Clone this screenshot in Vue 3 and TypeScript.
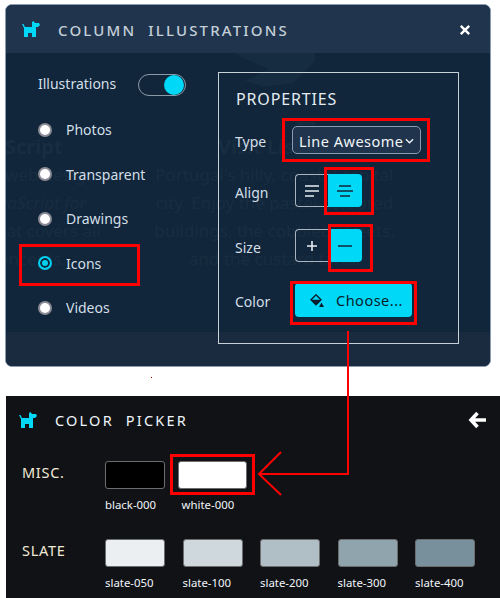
<script setup lang="ts">
const radios = [
  { name: 'Photos', on: false },
  { name: 'Transparent', on: false },
  { name: 'Drawings', on: false },
  { name: 'Icons', on: true },
  { name: 'Videos', on: false },
]

const slates = [
  { name: 'slate-050', color: '#eceff1' },
  { name: 'slate-100', color: '#cfd8dc' },
  { name: 'slate-200', color: '#b0bec5' },
  { name: 'slate-300', color: '#90a4ae' },
  { name: 'slate-400', color: '#78909c' },
]

const dogPath = 'M2 7L0 3h1.5L3 6h7V1l1.5-1L13 2h4l1 2-2 2h-2v10h-4v-4H6v4H2z'
</script>

<template>
  <div class="page">
    <section class="modal">
      <header class="modal-head">
        <svg class="dog" viewBox="0 0 18 16"><path :d="dogPath" /></svg>
        <h1 class="modal-title">COLUMN&nbsp; ILLUSTRATIONS</h1>
        <svg class="close" viewBox="0 0 10 10"><path d="M1.5 1.5l7 7M8.5 1.5l-7 7" /></svg>
      </header>

      <div class="modal-body">
        <!-- page behind the dialog, shows through -->
        <div class="ghost">
          <svg class="ghost-shape" viewBox="0 0 80 34"><path d="M0 0H80V8L58 30L30 34L10 28L34 16L10 6z" /></svg>
          <span class="ghost-bar"></span>
          <div class="ghost-left">
            <b>Script</b>
            <span>web design</span>
            <i>JavaScript for</i>
            <span>that covers all</span>
            <span>concepts.</span>
          </div>
          <div class="ghost-right">
            <b>Visit Lisbon</b>
            <span>Portugal's hilly, coastal capital</span>
            <span>city. Enjoy the pastel-coloured</span>
            <span>buildings, the cobbled streets,</span>
            <span>and the custard tarts.</span>
          </div>
        </div>

        <div class="options">
          <div class="toggle-row">
            <span class="toggle-label">Illustrations</span>
            <span class="toggle"><span class="knob"></span></span>
          </div>
          <div v-for="r in radios" :key="r.name" class="radio-row">
            <span class="radio" :class="{ on: r.on }"></span>
            <span>{{ r.name }}</span>
          </div>
        </div>

        <div class="props">
          <h2 class="props-title">PROPERTIES</h2>
          <div class="prop type-row">
            <span class="prop-label">Type</span>
            <div class="select">
              <span>Line Awesome</span>
              <svg viewBox="0 0 10 6"><path d="M1 1l4 4 4-4" /></svg>
            </div>
          </div>
          <div class="prop align-row">
            <span class="prop-label">Align</span>
            <div class="btn-group">
              <button class="seg">
                <svg viewBox="0 0 14 12"><path d="M0 1h14M0 6h14M0 11h9" /></svg>
              </button>
              <button class="seg active">
                <svg viewBox="0 0 16 12"><path d="M2 1h12M0 6h16M3 11h10" /></svg>
              </button>
            </div>
          </div>
          <div class="prop size-row">
            <span class="prop-label">Size</span>
            <div class="btn-group">
              <button class="seg">
                <svg viewBox="0 0 12 12"><path d="M6 1v10M1 6h10" /></svg>
              </button>
              <button class="seg active">
                <svg viewBox="0 0 14 12"><path d="M0 6h14" /></svg>
              </button>
            </div>
          </div>
          <div class="prop color-row">
            <span class="prop-label">Color</span>
            <button class="choose">
              <svg viewBox="0 0 14 13">
                <path class="bucket" d="M6 .8L11 5.8L6 10.8L1 5.8Z" />
                <path d="M1 5.8H11L6 10.8Z M11.5 8.5L14 13H9Z" />
              </svg>
              <span>Choose...</span>
            </button>
          </div>
        </div>
      </div>

      <div class="modal-foot"></div>
    </section>

    <section class="picker">
      <header class="picker-head">
        <svg class="dog" viewBox="0 0 18 16"><path :d="dogPath" /></svg>
        <h1 class="picker-title">COLOR&nbsp; PICKER</h1>
        <svg class="back" viewBox="0 0 18 18"><path d="M9.5 2L3 9L9.5 16M3 9H18" /></svg>
      </header>

      <div class="swatch-row misc">
        <span class="group-name">MISC.</span>
        <div class="swatch-item">
          <span class="swatch black"></span>
          <span class="swatch-name">black-000</span>
        </div>
        <div class="swatch-item white-item">
          <span class="swatch white"></span>
          <span class="swatch-name">white-000</span>
        </div>
      </div>

      <div class="swatch-row slate">
        <span class="group-name">SLATE</span>
        <div v-for="s in slates" :key="s.name" class="swatch-item">
          <span class="swatch" :style="{ background: s.color }"></span>
          <span class="swatch-name">{{ s.name }}</span>
        </div>
      </div>
    </section>

    <!-- red callouts drawn on top of the screenshot -->
    <svg class="callouts" viewBox="0 0 500 598">
      <rect x="20.5" y="245.5" width="118" height="39" />
      <rect x="283.5" y="119.5" width="145" height="41" />
      <rect x="325.5" y="168.5" width="47" height="45" />
      <rect x="329.5" y="225.5" width="42" height="45" />
      <rect x="291.5" y="282.5" width="124" height="41" />
      <rect x="171.5" y="455.5" width="82" height="38" />
      <path d="M348 331V474H259M281 452L259 474L281 495" />
      <path class="dot" d="M151 377h1v1h-1z" />
    </svg>
  </div>
</template>

<style>
body {
  background: #fff;
}
</style>

<style scoped>
.page {
  position: relative;
  width: 500px;
  height: 598px;
  overflow: hidden;
  padding: 4px 0 0 5px;
  box-sizing: border-box;
  font-family: "Noto Sans", sans-serif;
  color: #dbe6ee;
}

.modal {
  width: 486px;
  height: 363px;
  box-sizing: border-box;
  border: 1px solid #8b9cb0;
  border-radius: 7px;
  background: #11263a;
  display: flex;
  flex-direction: column;
  overflow: hidden;
}
.modal-head {
  height: 48px;
  flex: none;
  background: #20354d;
  display: flex;
  align-items: center;
  padding: 0 19px 0 16px;
}
.dog {
  width: 18px;
  height: 16px;
  fill: #00d8f8;
  flex: none;
}
.modal-title {
  margin: 2px 0 0 18px;
  font-size: 15px;
  font-weight: 500;
  letter-spacing: 2.15px;
  color: #c3ced8;
  flex: 1;
}
.close {
  width: 12px;
  height: 12px;
  margin-top: 2px;
  fill: none;
  stroke: #fff;
  stroke-width: 2;
}

.modal-body {
  position: relative;
  z-index: 1;
  height: 279px;
  flex: none;
  display: flex;
}
.ghost {
  position: absolute;
  inset: 0;
  color: #182d41;
  font-size: 17px;
  line-height: 28px;
}
.ghost-shape {
  position: absolute;
  left: 229px;
  top: 0;
  width: 80px;
  height: 34px;
  fill: #162c41;
}
.ghost-bar {
  position: absolute;
  left: 291px;
  top: 69px;
  width: 18px;
  height: 3px;
  background: #162c41;
}
.ghost-left,
.ghost-right {
  position: absolute;
  display: flex;
  flex-direction: column;
}
.ghost-left {
  left: -30px;
  top: 80px;
  align-items: flex-start;
}
.ghost-left b {
  padding-left: 29px;
  font-size: 20px;
}
.ghost-left span:nth-of-type(1) {
  padding-left: 29px;
}
.ghost-left i {
  padding-left: 9px;
}
.ghost-left span:nth-of-type(2),
.ghost-left span:nth-of-type(3) {
  padding-left: 14px;
}
.ghost-right {
  left: 131px;
  top: 80px;
  width: 275px;
  text-align: center;
}
.ghost-right b {
  font-size: 20px;
  text-align: left;
  padding-left: 81px;
}

.options {
  position: relative;
  width: 212px;
  flex: none;
  box-sizing: border-box;
  padding: 20px 0 0 32px;
  font-size: 14px;
  color: #d3dfe8;
}
.toggle-row {
  display: flex;
  align-items: center;
  height: 22px;
  margin-bottom: 12.5px;
}
.toggle-label {
  width: 100px;
  margin-top: -2px;
}
.toggle {
  width: 48px;
  height: 22px;
  margin-top: 2px;
  box-sizing: border-box;
  border: 1.5px solid #8a9aa8;
  border-radius: 11px;
  display: flex;
  justify-content: flex-end;
  align-items: center;
  padding-right: 1px;
}
.knob {
  width: 20px;
  height: 20px;
  border-radius: 50%;
  background: #00d8f8;
}
.radio-row {
  height: 44.5px;
  display: flex;
  align-items: center;
  gap: 14px;
}
.radio {
  width: 14px;
  height: 14px;
  box-sizing: border-box;
  border-radius: 50%;
  border: 2px solid #8b8b96;
  background: #fff;
}
.radio.on {
  border-color: #00d0f0;
  background: #00d0f0;
  box-shadow: inset 0 0 0 2px #11263a;
}

.props {
  position: relative;
  width: 241px;
  height: 272px;
  flex: none;
  box-sizing: border-box;
  margin-top: 19px;
  border: 1px solid #c8d0d8;
  padding: 15px 0 0 16px;
}
.props-title {
  margin: 0 0 16px 1px;
  font-size: 16px;
  line-height: 22px;
  font-weight: 400;
  letter-spacing: 0.85px;
  color: #e4ebf1;
}
.prop {
  display: flex;
  align-items: center;
  font-size: 14px;
  color: #d3dfe8;
}
.prop-label {
  padding-top: 3px;
}
.type-row .prop-label {
  width: 57px;
}
.align-row .prop-label,
.size-row .prop-label,
.color-row .prop-label {
  width: 60px;
}
.type-row {
  margin-bottom: 20px;
}
.align-row {
  margin-bottom: 22px;
}
.size-row {
  margin-bottom: 21px;
}
.select {
  width: 129px;
  height: 28px;
  box-sizing: border-box;
  border: 1px solid #8a9bb0;
  border-radius: 5px;
  background: #20354d;
  display: flex;
  align-items: center;
  justify-content: space-between;
  padding: 1px 6px 0 6px;
  font-size: 14.5px;
  color: #f2f6f9;
  letter-spacing: 0.5px;
}
.select svg {
  width: 9px;
  height: 6px;
  fill: none;
  stroke: #f2f6f9;
  stroke-width: 1.4;
}
.btn-group {
  display: flex;
}
.seg {
  width: 33px;
  height: 33px;
  padding: 0;
  box-sizing: border-box;
  background: transparent;
  border: 1px solid #a8b4c0;
  border-right: none;
  border-radius: 4px 0 0 4px;
  display: flex;
  align-items: center;
  justify-content: center;
}
.seg svg {
  width: 14px;
  height: 12px;
  fill: none;
  stroke: #e8eef3;
  stroke-width: 1.6;
}
.seg.active {
  width: 34px;
  background: #00d8f8;
  border: none;
  border-radius: 0 4px 4px 0;
}
.seg.active svg {
  width: 16px;
  stroke: #11263a;
}
.choose {
  width: 117px;
  height: 34px;
  padding: 0 0 0 15px;
  box-sizing: border-box;
  border: none;
  border-radius: 4px;
  background: #00d8f8;
  display: flex;
  align-items: center;
  gap: 12px;
  font-family: inherit;
  font-size: 14.5px;
  letter-spacing: 0.5px;
  color: #0b1c2b;
}
.choose svg {
  width: 14px;
  height: 13px;
  fill: #0b1c2b;
}
.choose .bucket {
  fill: none;
  stroke: #0b1c2b;
  stroke-width: 1.4;
}

.modal-foot {
  flex: 1;
  background: #1a2b40;
}

.picker {
  width: 494px;
  height: 202px;
  margin: 29px 0 0 1px;
  background: #101216;
  box-sizing: border-box;
  padding: 15px 0 0 13px;
}
.picker-head {
  display: flex;
  align-items: center;
  height: 18px;
}
.picker-title {
  flex: 1;
  margin: 0 0 0 18px;
  font-size: 14.5px;
  font-weight: 400;
  letter-spacing: 2.2px;
  color: #eef5fb;
}
.back {
  width: 18px;
  height: 18px;
  margin-right: 14px;
  fill: none;
  stroke: #fff;
  stroke-width: 3.6;
}
.swatch-row {
  display: flex;
  margin-left: 3px;
}
.misc {
  margin-top: 32px;
}
.slate {
  margin-top: 25px;
}
.group-name {
  width: 83px;
  flex: none;
  font-size: 14.5px;
  line-height: 22px;
  letter-spacing: 0.7px;
  color: #f1e9d6;
}
.swatch-item {
  display: flex;
  flex-direction: column;
  width: 60px;
  margin-right: 17.5px;
}
.swatch {
  display: block;
  height: 28px;
  box-sizing: border-box;
  border: 1px solid #6d6d70;
  border-radius: 3px;
}
.swatch.black {
  background: #000;
}
.swatch.white {
  background: #fff;
  width: 69px;
}
.white-item {
  width: 69px;
  margin-left: -5px;
  align-items: flex-start;
}
.white-item .swatch-name {
  margin-left: 4px;
}
.swatch-name {
  margin-top: 7px;
  font-size: 11.4px;
  line-height: 18px;
  color: #f0f5f9;
  white-space: nowrap;
}

.callouts {
  position: absolute;
  inset: 0;
  width: 500px;
  height: 598px;
  z-index: 2;
  fill: none;
  stroke: #f00;
  stroke-width: 3;
}
.callouts path {
  stroke-width: 2;
}
.callouts .dot {
  stroke: none;
  fill: #a00;
}
</style>
